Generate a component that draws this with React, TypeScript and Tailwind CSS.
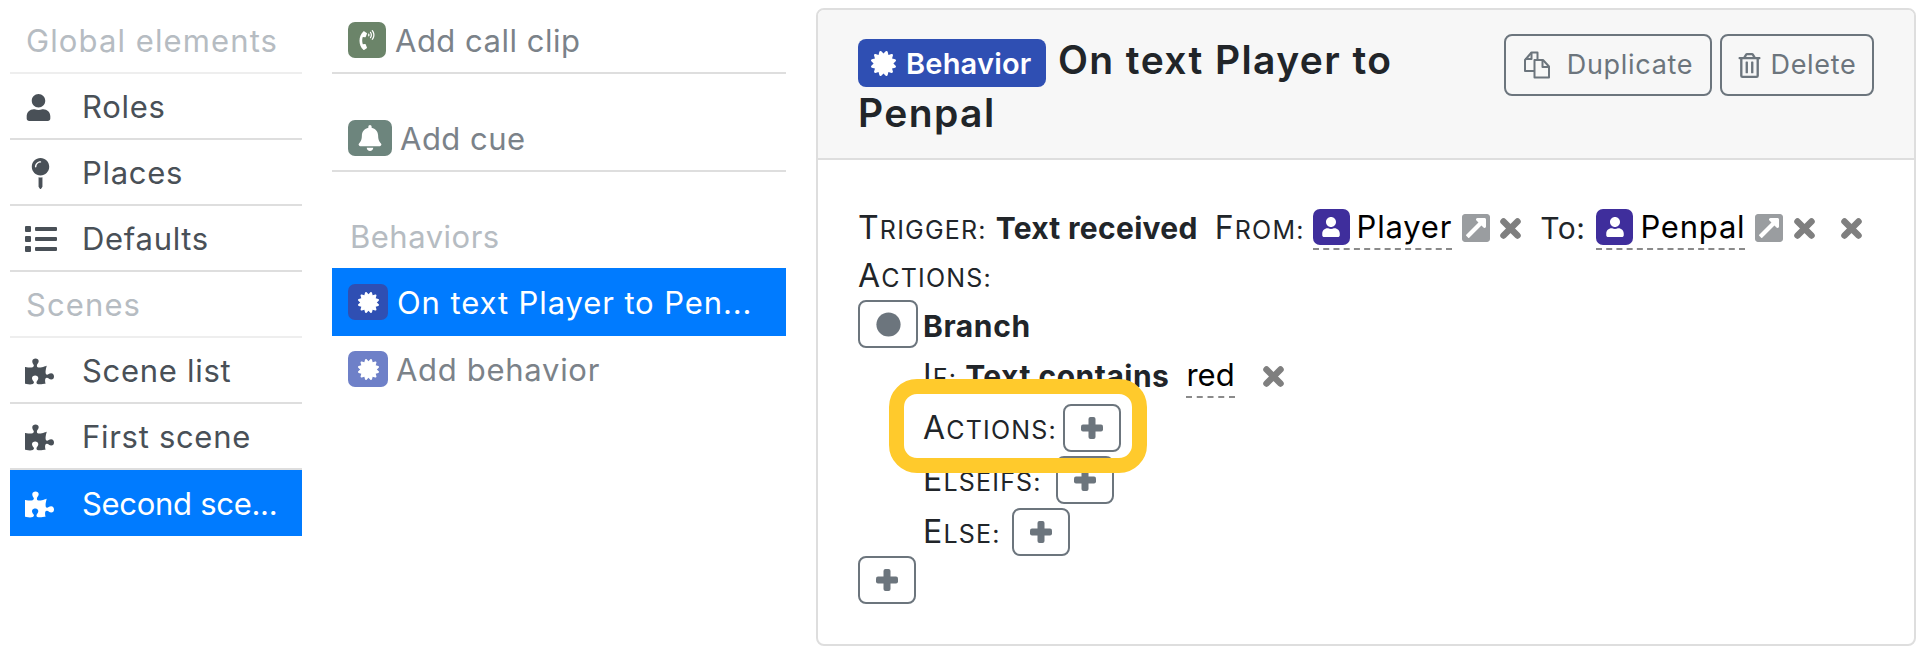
import type { ReactNode } from "react";
import {
  FaBell,
  FaCertificate,
  FaCircle,
  FaExternalLinkSquareAlt,
  FaList,
  FaMapPin,
  FaPhoneVolume,
  FaPuzzlePiece,
  FaRegTrashAlt,
  FaUser,
} from "react-icons/fa";

function SideHeading({ children }: { children: ReactNode }) {
  return <div className="h-[66px] flex items-center pl-4 pt-[2px] text-[31px] tracking-[1.1px] text-[#b6bcc2] border-b-2 border-[#eeeeee]">{children}</div>;
}

function SideRow({ icon, label, active }: { icon: ReactNode; label: string; active?: boolean }) {
  return (
    <div className={`h-[66px] flex items-center pl-[15px] pt-[2px] text-[31px] ${active ? "bg-[#007bff] text-white tracking-[-0.3px]" : "border-b-2 border-[#dedede] text-[#495057] tracking-[0.7px]"}`}>
      <span className="w-[57px] shrink-0 flex items-center">{icon}</span>
      <span className="whitespace-nowrap">{label}</span>
    </div>
  );
}

function Chip({ bg, w, children }: { bg: string; w: string; children: ReactNode }) {
  return <span className={`${bg} ${w} h-9 shrink-0 rounded-[7px] flex items-center justify-center text-white`}>{children}</span>;
}

// first letter full size, the rest as small capitals
function Label({ text }: { text: string }) {
  return (
    <span className="text-[32px] tracking-[1.2px] whitespace-nowrap">
      {text.slice(0, 1)}
      <span className="text-[25px] uppercase">{text.slice(1)}</span>
    </span>
  );
}

function PlusIcon() {
  return (
    <svg width="22" height="22" viewBox="0 0 22 22" fill="currentColor">
      <rect x="7.5" y="0" width="7" height="22" rx="2" />
      <rect x="0" y="7.5" width="22" height="7" rx="2" />
    </svg>
  );
}

function PlusButton() {
  return (
    <button className="w-[58px] h-12 shrink-0 border-2 border-[#6c757d] rounded-lg flex items-center justify-center text-[#6c757d]">
      <PlusIcon />
    </button>
  );
}

function CopyIcon() {
  return (
    <svg width="28" height="28" viewBox="0 0 27 28" fill="none" stroke="currentColor" strokeWidth="2" strokeLinejoin="round">
      <path d="M11 20H1.5V9L8 1.5h6V9" />
      <path d="M8 1.5V8H1.5" />
      <path d="M11 9h8.5l6 6.5V26.500H11z" />
      <path d="M19 9v7h6.500" />
    </svg>
  );
}

function ExtLink() {
  return <FaExternalLinkSquareAlt size={32} className="text-[#9a9da0] shrink-0" />;
}

function Remove() {
  return (
    <svg width="21" height="21" viewBox="0 0 21 21" stroke="#7f7f7f" strokeWidth="6.500" strokeLinecap="round" className="shrink-0">
      <path d="M3.500 3.500l14 14M17.500 3.500l-14 14" />
    </svg>
  );
}

function Role({ name }: { name: string }) {
  return (
    <span className="flex items-center gap-[7px] h-[44px] border-b-2 border-dashed border-[#8a8a8a] text-black text-[31px] tracking-[0.8px]">
      <span className="w-[37px] h-9 bg-[#3f2e9c] rounded-[7px] flex items-center justify-center text-white">
        <FaUser size={20} />
      </span>
      {name}
    </span>
  );
}

export default function App() {
  return (
    <div className="w-[1930px] h-[658px] bg-white flex font-['Inter',sans-serif] overflow-hidden">
      {/* Left nav */}
      <div className="w-[292px] ml-[10px] mt-2 shrink-0">
        <SideHeading>Global elements</SideHeading>
        <SideRow icon={<FaUser size={27} />} label="Roles" />
        <SideRow icon={<FaMapPin size={31} />} label="Places" />
        <SideRow icon={<FaList size={32} />} label="Defaults" />
        <SideHeading>Scenes</SideHeading>
        <SideRow icon={<FaPuzzlePiece size={29} />} label="Scene list" />
        <SideRow icon={<FaPuzzlePiece size={29} />} label="First scene" />
        <SideRow icon={<FaPuzzlePiece size={29} />} label="Second sce..." active />
      </div>

      {/* Middle column */}
      <div className="w-[454px] ml-[30px] mt-2 shrink-0 text-[31px] tracking-[0.5px] text-[#7b8289]">
        <div className="h-[66px] flex items-center gap-[9px] pl-4 border-b-2 border-[#dedede]">
          <Chip bg="bg-[#6b8469]" w="w-[38px]"><FaPhoneVolume size={20} /></Chip>
          <span className="pt-[2px]">Add call clip</span>
        </div>
        <div className="h-[66px] mt-8 flex items-center gap-2 pl-4 border-b-2 border-[#dedede]">
          <Chip bg="bg-[#6d857d]" w="w-[44px]"><FaBell size={26} /></Chip>
          <span className="pt-[2px]">Add cue</span>
        </div>
        <div className="h-[64px] mt-8 flex items-center pl-[18px] pt-[2px] text-[#b6bcc2]">Behaviors</div>
        <div className="h-[68px] flex items-center gap-[9px] pl-4 bg-[#007bff] text-white">
          <Chip bg="bg-[#2f4fb3]" w="w-10"><FaCertificate size={21} /></Chip>
          <span className="whitespace-nowrap tracking-[0.9px] pt-[2px]">On text Player to Pen...</span>
        </div>
        <div className="h-[66px] flex items-center gap-2 pl-4">
          <Chip bg="bg-[#6e80c8]" w="w-10"><FaCertificate size={21} /></Chip>
          <span className="pt-[2px] tracking-[0.7px]">Add behavior</span>
        </div>
      </div>

      {/* Detail panel */}
      <div className="relative w-[1100px] h-[638px] ml-[30px] mt-2 shrink-0 border-2 border-[#dedede] rounded-lg">
        <div className="h-[150px] bg-[#f7f7f7] border-b-2 border-[#dedede] rounded-t-md flex justify-between pl-10 pr-10 pt-6">
          <div className="w-[630px] text-[39px] tracking-[1.4px] leading-[51px] font-semibold text-[#212529]">
            <span className="inline-flex items-center align-middle h-12 w-[188px] mr-3 rounded-lg bg-[#2f4fb3] text-white text-[29px] tracking-[0.2px] font-semibold gap-[10px] pl-[13px]">
              <FaCertificate size={25} />
              Behavior
            </span>
            On text Player to Penpal
          </div>
          <div className="flex gap-2 h-[62px] text-[27px] tracking-[0.7px] text-[#6c757d]">
            <button className="w-[208px] border-2 border-[#6c757d] rounded-lg flex items-center justify-center gap-4">
              <CopyIcon />
              Duplicate
            </button>
            <button className="w-[154px] border-2 border-[#6c757d] rounded-lg flex items-center justify-center gap-2">
              <FaRegTrashAlt size={25} />
              Delete
            </button>
          </div>
        </div>

        <div className="pl-10 pt-11 text-[30px] text-[#212529]">
          <div className="h-12 flex items-center whitespace-nowrap">
            <Label text="Trigger:" />
            <b className="ml-[9px] tracking-[0.3px]">Text received</b>
            <span className="ml-[17px]"><Label text="From:" /></span>
            <span className="ml-2"><Role name="Player" /></span>
            <span className="ml-2"><ExtLink /></span>
            <span className="ml-2"><Remove /></span>
            <span className="ml-[19px] text-[30px] tracking-[0.5px]">To:</span>
            <span className="ml-[11px]"><Role name="Penpal" /></span>
            <span className="ml-2"><ExtLink /></span>
            <span className="ml-[9px]"><Remove /></span>
            <span className="ml-[26px]"><Remove /></span>
          </div>
          <div className="h-12 flex items-center"><Label text="Actions:" /></div>
          <div className="h-12 flex items-center gap-[5px]">
            <button className="w-[60px] h-12 border-2 border-[#6c757d] rounded-lg flex items-center justify-center text-[#6c757d]">
              <FaCircle size={25} />
            </button>
            <b className="pt-[5px] tracking-[0.6px]">Branch</b>
          </div>
          <div className="pl-[65px]">
            <div className="h-12 mt-1 flex items-center whitespace-nowrap">
              <Label text="If:" />
              <b className="ml-[8px] tracking-[0.5px]">Text contains</b>
              <span className="ml-[17px] h-[44px] flex items-center border-b-2 border-dashed border-[#8a8a8a] text-black text-[31px]">red</span>
              <span className="ml-7"><Remove /></span>
            </div>
            <div className="h-12 mt-1 flex items-center gap-[6px]"><Label text="Actions:" /> <PlusButton /></div>
            <div className="h-12 mt-1 flex items-center gap-[14px]"><Label text="Elseifs:" /> <PlusButton /></div>
            <div className="h-12 mt-1 flex items-center gap-[11px]"><Label text="Else:" /> <PlusButton /></div>
          </div>
          <PlusButton />
        </div>

        {/* Highlight ring over the nested actions row */}
        <div className="absolute left-[71px] top-[369px] w-[258px] h-[94px] border-[15px] border-[#ffca2c] rounded-[28px]" />
      </div>
    </div>
  );
}
